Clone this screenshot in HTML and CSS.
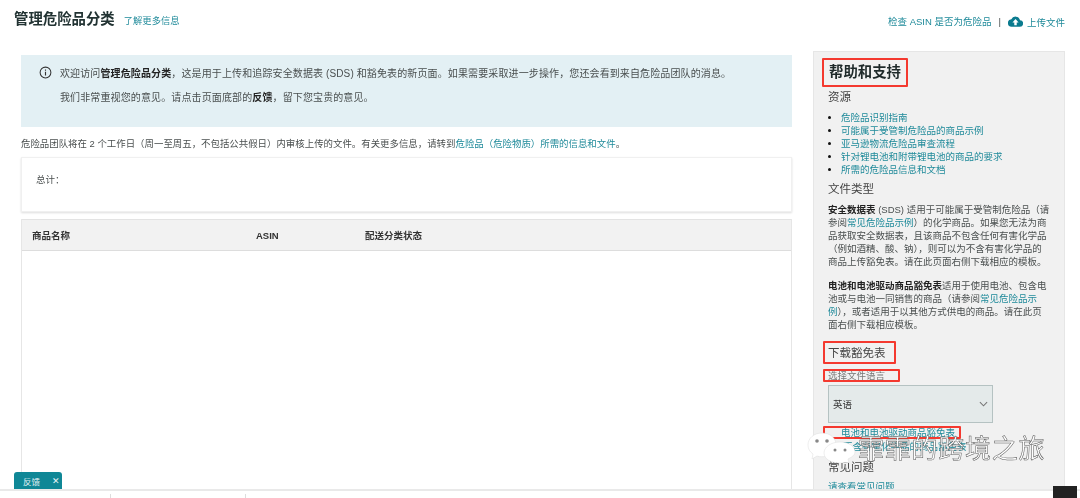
FILE: index.html
```html
<!DOCTYPE html>
<html lang="zh">
<head>
<meta charset="utf-8">
<title>管理危险品分类</title>
<link rel="stylesheet" href="styles.css">
</head>
<body>
<div class="page">
  <header class="topbar">
    <div class="title-group">
      <h1>管理危险品分类</h1>
      <a class="link learn">了解更多信息</a>
    </div>
    <div class="actions">
      <a class="link">检查 ASIN 是否为危险品</a>
      <span class="sep">|</span>
      <svg class="cloud" viewBox="0 0 24 18" width="15" height="11"><path d="M19.400 7A7.500 7.500 0 0 0 5.200 5.500 6 6 0 0 0 6 17.500h13a5 5 0 0 0 .4-10.500z" fill="#0b7b8f"/><path d="M12 5l5 5.500h-3V15h-4v-4.500H7z" fill="#fff"/></svg>
      <a class="link upload">上传文件</a>
    </div>
  </header>
  <div class="columns">
    <main class="main">
      <section class="notice">
        <svg class="info" viewBox="0 0 14 14" width="13" height="13"><circle cx="7" cy="7" r="5.800" fill="none" stroke="#333" stroke-width="1.100"/><path d="M7 6.200v4M7 3.800v1.200" stroke="#333" stroke-width="1.200"/></svg>
        <div class="notice-text">
          <p>欢迎访问<b>管理危险品分类</b>，这是用于上传和追踪安全数据表 (SDS) 和豁免表的新页面。如果需要采取进一步操作，您还会看到来自危险品团队的消息。</p>
          <p>我们非常重视您的意见。请点击页面底部的<b>反馈</b>，留下您宝贵的意见。</p>
        </div>
      </section>
      <p class="review">危险品团队将在 2 个工作日（周一至周五，不包括公共假日）内审核上传的文件。有关更多信息，请转到<a class="link">危险品（危险物质）所需的信息和文件</a>。</p>
      <section class="total">总计：</section>
      <section class="table">
        <div class="thead">
          <span class="col-name">商品名称</span>
          <span class="col-asin">ASIN</span>
          <span>配送分类状态</span>
        </div>
      </section>
    </main>
    <aside class="help">
      <h2 class="marked help-title">帮助和支持</h2>
      <h3 class="res-title">资源</h3>
      <ul>
        <li><a class="link">危险品识别指南</a></li>
        <li><a class="link">可能属于受管制危险品的商品示例</a></li>
        <li><a class="link">亚马逊物流危险品审查流程</a></li>
        <li><a class="link">针对锂电池和附带锂电池的商品的要求</a></li>
        <li><a class="link">所需的危险品信息和文档</a></li>
      </ul>
      <h3 class="type-title">文件类型</h3>
      <p class="desc"><b>安全数据表</b> (SDS) 适用于可能属于受管制危险品（请参阅<a class="link">常见危险品示例</a>）的化学商品。如果您无法为商品获取安全数据表，且该商品不包含任何有害化学品（例如酒精、酸、钠），则可以为不含有害化学品的商品上传豁免表。请在此页面右侧下载相应的模板。</p>
      <p class="desc"><b>电池和电池驱动商品豁免表</b>适用于使用电池、包含电池或与电池一同销售的商品（请参阅<a class="link">常见危险品示例</a>），或者适用于以其他方式供电的商品。请在此页面右侧下载相应模板。</p>
      <h3 class="marked dl-title">下载豁免表</h3>
      <div class="marked lang-label">选择文件语言</div>
      <div class="select"><span>英语</span><svg viewBox="0 0 10 6" width="9" height="6"><path d="M1 1l4 4 4-4" fill="none" stroke="#777" stroke-width="1.200"/></svg></div>
      <a class="link marked file-link">电池和电池驱动商品豁免表</a>
      <a class="link file-link2">不含有害化学品的商品豁免表</a>
      <h3 class="faq">常见问题</h3>
      <a class="link faq-link">请查看常见问题</a>
    </aside>
  </div>
  <div class="watermark">
    <svg viewBox="0 0 50 31" width="50" height="31"><path d="M15 1C7 1 1 6 1 13c0 4 2 7 5 9l-1 5 5-3c2 .6 3 .8 5 .8 8 0 14-5 14-12S23 1 15 1z" fill="#fff" stroke="#ddd" stroke-width=".5"/><path d="M33 10c-9 0-16 5-16 11s7 10 16 10c2 0 3 0 5-.6l4 .6-1-4c4-2 7-4 7-7 0-6-7-10-15-10z" fill="#fff" stroke="#ddd" stroke-width=".5"/><circle cx="10" cy="9" r="1.800" fill="#888"/><circle cx="20" cy="9" r="1.800" fill="#888"/><circle cx="28" cy="18" r="1.500" fill="#888"/><circle cx="38" cy="18" r="1.500" fill="#888"/></svg>
    <span>霏霏的跨境之旅</span>
  </div>
  <div class="feedback"><span>反馈</span><span>✕</span></div>
  <footer class="bottom">
    <span class="tick tick-a"></span>
    <span class="tick tick-b"></span>
    <span class="dark-box"></span>
  </footer>
</div>
</body>
</html>
```
FILE: styles.css
```css
* { box-sizing: border-box; }
html, body { margin: 0; height: 100%; }
body { background: #fff; font-family: "Liberation Sans", "Noto Sans CJK SC", sans-serif; font-size: 9.500px; color: #4a4f4f; overflow: hidden; }
.page { position: relative; width: 1080px; height: 498px; overflow: hidden; filter: blur(0.45px); }
.link { color: #1f8a9a; text-decoration: none; }
b { color: #222; }
p { margin: 0; }
.topbar { height: 51px; display: flex; justify-content: space-between; padding: 10px 15px 0 14px; }
.title-group { display: flex; align-items: baseline; gap: 9px; height: 18px; }
h1 { margin: 0; font-size: 14.400px; line-height: 18px; color: #233; font-weight: 700; }
.learn { font-size: 9.300px; }
.actions { display: flex; align-items: center; height: 22px; font-size: 9.500px; }
.sep { margin: 0 7px 0 7px; }
.cloud { margin-right: 4px; }
.upload { margin-top: 2px; }
.columns { display: flex; align-items: flex-start; padding-left: 21px; gap: 21px; }
.main { width: 771px; flex: none; padding-top: 4px; }
.notice { height: 72px; background: #e3f0f4; padding: 11px 0 0 18px; display: flex; gap: 8px; }
.info { flex: none; }
.notice-text p { font-size: 10px; line-height: 15px; margin-bottom: 9px; white-space: nowrap; letter-spacing: .12px; }
.review { font-size: 9.440px; line-height: 12px; margin-top: 11px; white-space: nowrap; }
.total { height: 55px; margin-top: 7px; padding: 15px 14px; border: 1px solid #f0f0f0; box-shadow: 0 1px 2px #ddd; line-height: 13px; }
.table { margin-top: 7px; height: 300px; border-left: 1px solid #e6e6e6; border-right: 1px solid #e6e6e6; }
.thead { height: 32px; background: #f2f2f2; border-top: 1px solid #e3e3e3; border-bottom: 1px solid #ddd; display: flex; align-items: center; padding-left: 10px; font-weight: 700; color: #333; font-size: 9.500px; }
.col-name { width: 224px; }
.col-asin { width: 109px; }
.help { width: 252px; height: 440px; flex: none; background: #f1f1f1; border: 1px solid #e6e6e6; padding: 6px 14px 0 14px; overflow: hidden; }
.marked { width: fit-content; border-radius: 1px; border-width: 2px; border-style: solid; border-color: #f4392f; }
h2 { margin: 0; font-size: 14.400px; font-weight: 700; color: #1f2a2a; }
.help-title { height: 29px; line-height: 25px; padding: 0 5px; margin-left: -6px; }
h3 { margin: 0; font-size: 11.500px; font-weight: 400; line-height: 16px; color: #444; }
.res-title { margin-top: 2px; }
ul { margin: 5.500px 0 0; padding: 0 0 0 13px; line-height: 13px; color: #111; }
.type-title { margin-top: 5.500px; }
.desc { line-height: 13px; width: 222px; margin-top: 5.500px; }
.desc + .desc { margin-top: 11px; }
h3.dl-title { margin: 10.500px 0 0 -5px; height: 23px; line-height: 21px; padding: 0 8px 0 3px; border-color: #f4392f; }
div.lang-label { margin: 5px 0 0 -5px; height: 13px; padding: 0 13px 0 3px; line-height: 9px; color: #777; border-color: #f4392f; }
.select { margin-top: 3px; width: 165px; height: 38px; background: #e4eaea; border: 1px solid #b5c2c2; display: flex; align-items: center; justify-content: space-between; padding: 0 4px; color: #333; }
.file-link { display: block; margin: 3px 0 0 -5px; padding: 0 4px 0 16px; height: 13px; line-height: 9px; }
.file-link2 { display: block; line-height: 12px; padding-left: 15px; margin-top: 2px; }
.faq { margin-top: 6px; margin-bottom: 6px; }
.faq-link { display: block; line-height: 12px; }
.watermark { position: absolute; left: 807px; top: 430px; display: flex; align-items: center; gap: 1px; }
.watermark span { font-size: 26px; line-height: 30px; color: #fff; -webkit-text-stroke: .5px #555; letter-spacing: .75px; margin-top: 4px; }
.feedback { position: absolute; left: 14px; top: 472px; width: 48px; height: 17px; background: #0f8796; border-radius: 3px 3px 0 0; color: #e8f4f6; display: flex; justify-content: space-between; align-items: center; padding: 0 2px 0 9px; font-size: 8.500px; }
.bottom { position: absolute; left: 0; right: 0; top: 489px; height: 9px; background: #fff; border-top: 2px solid #e9e9e9; }
.tick { position: absolute; top: 3px; width: 1px; height: 4px; background: #ddd; }
.tick-a { left: 110px; }
.tick-b { left: 245px; }
.dark-box { position: absolute; left: 1053px; top: -5px; width: 24px; height: 12px; background: #222; }
```
